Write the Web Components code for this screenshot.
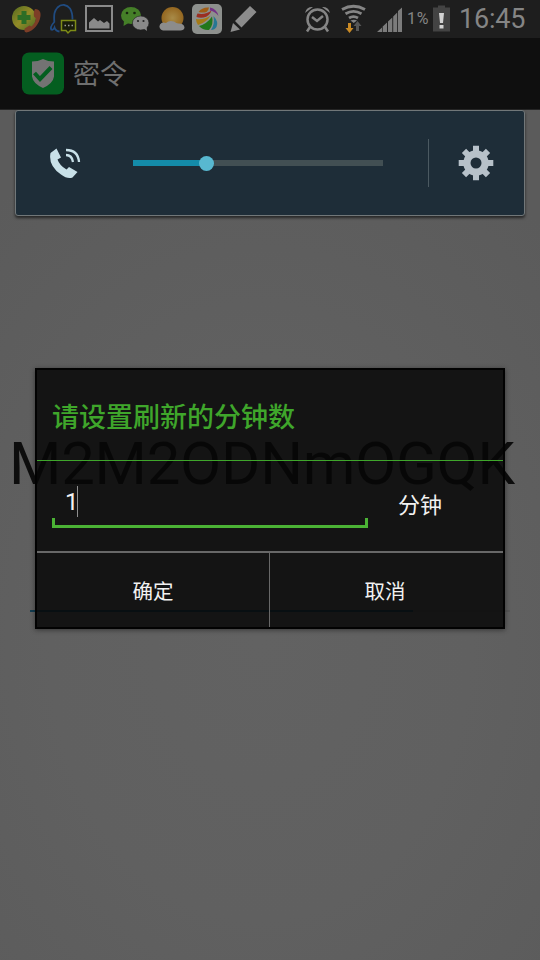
<!DOCTYPE html>
<html lang="zh-CN">
<head>
<meta charset="utf-8">
<title>密令</title>
<style>
html,body{margin:0;padding:0;background:#5e5e5e}
body{width:540px;height:960px;overflow:hidden;font-family:Roboto,"Noto Sans CJK SC",sans-serif}
</style>
</head>
<body>
<phone-screen>
  <status-bar slot="bars"></status-bar>
  <action-bar slot="bars">密令</action-bar>
  <code-display slot="content">M2M2ODNmOGQK</code-display>
  <volume-panel slot="overlay"></volume-panel>
  <minutes-dialog slot="overlay">
    <span slot="title">请设置刷新的分钟数</span>
    <edit-field slot="field">1</edit-field>
    <span slot="unit">分钟</span>
    <dialog-button slot="buttons">确定</dialog-button>
    <dialog-button slot="buttons">取消</dialog-button>
  </minutes-dialog>
</phone-screen>
<script>
function define(name, html) {
  customElements.define(name, class extends HTMLElement {
    constructor() {
      super();
      const t = document.createElement('template');
      t.innerHTML = html;
      this.attachShadow({mode: 'open'}).append(t.content.cloneNode(true));
    }
  });
}

define('phone-screen', `
<style>
:host{display:flex;flex-direction:column;position:relative;width:540px;height:960px;overflow:hidden;
 background:radial-gradient(ellipse 420px 560px at 260px 640px,#626262 0,#606060 50%,#5b5b5b 100%)}
main{flex:1}
</style>
<slot name="bars"></slot><main><slot name="content"></slot></main><slot name="overlay"></slot>`);

define('status-bar', `
<style>
:host{display:flex;box-sizing:border-box;height:38px;background:#1e1e1e;color:#858585}
.left{display:flex;width:296px}
.right{display:flex;flex:1;align-items:center;justify-content:flex-start}
svg{display:block;flex:none}
.pct{width:24px;margin-left:2px;font-size:16px;letter-spacing:.7px;line-height:40px;white-space:nowrap}
.time{margin-left:8px;font-size:27px;line-height:38px;letter-spacing:-.2px;white-space:nowrap}
</style>
<div class="left">
<svg width="296" height="38" viewBox="0 0 296 38">
 <defs>
  <radialGradient id="sun"><stop offset="0" stop-color="#a88b48"/><stop offset="1" stop-color="#94661f"/></radialGradient>
  <linearGradient id="ball" x2="1" y2="1"><stop stop-color="#526a20"/><stop offset=".5" stop-color="#938b27"/><stop offset="1" stop-color="#486826"/></linearGradient>
 </defs>
 <circle cx="24" cy="18" r="12" fill="url(#ball)"/>
 <path d="M21.500 11h5v4h4v5h-4v4h-5v-4h-4v-5h4z" fill="#2c6d25"/>
 <path d="M35 9c5 0 6 4 5.500 7-1 8-7 15-14 16.500-2 0-3-3-1-4.500l4-2.500 2 1c3-3 4-5 4.500-8l-2-2c-.5-3 0-6 1-7.500z" fill="#7d3e27"/>
 <path d="M51.500 30c-1.500-2 0-5 2.800-8-.5-8 0-11 3.200-14.500 4-4 9.500-3 12.500 1 2.200 3.500 2.500 6.500 2.500 11M51.500 30q2 0 3-2.500 1 3.500 5 4" fill="none" stroke="#204b80" stroke-width="1.800"/>
 <path d="M61.500 20.500h14v10h-5l-2.500 2.500-2-2.500h-4.500z" fill="#191d0b" stroke="#7e8c17" stroke-width="1.500"/>
 <path d="M64.500 25.500h1.500M68 25.500h1.500M71.500 25.500h1.500" stroke="#999" stroke-width="1.500"/>
 <rect x="86" y="6" width="26" height="25" fill="none" stroke="#8a8a8a" stroke-width="2"/>
 <path d="M89 28.500v-6l5-4.500 4 3.500 2-1.500 4 3 3-2 2.500 2.500v5z" fill="#8a8a8a"/>
 <ellipse cx="131" cy="15.500" rx="10" ry="8.500" fill="#457f28"/><path d="M124 21l-.5 5 5-3z" fill="#457f28"/>
 <circle cx="127" cy="13" r="1.300" fill="#17240f"/><circle cx="134.500" cy="13" r="1.300" fill="#17240f"/>
 <ellipse cx="140.700" cy="23" rx="8.300" ry="7" fill="#898989" stroke="#1e1e1e" stroke-width=".6"/><path d="M143 28l4 3-.5-5z" fill="#898989"/>
 <circle cx="138" cy="21" r="1.100" fill="#252525"/><circle cx="143.500" cy="21" r="1.100" fill="#252525"/>
 <circle cx="172.500" cy="18" r="11" fill="url(#sun)"/>
 <path d="M163 30.500a4 4 0 0 1-3-6q2-3 6-1.500 3-3 8-1.500 3 2.500 5 2 5 0 5.500 4c0 2-2 3-4 3z" fill="#8c8c8c"/>
 <rect x="192" y="4" width="30" height="30" rx="5" fill="#8d908d"/>
 <path d="M198.500 12q3.500-5 10.500-4.500-.5 3-2.500 4.500-3.500 1-8 0z" fill="#a05d15"/>
 <path d="M197.500 13.500q8 1.500 14-3-2 6-8 7-4 .5-7-.5 0-2 1-3.500z" fill="#9b2f22"/>
 <path d="M196 19q9 1 14.500-3.500-4 7-12.500 9.500-2-3-2-6z" fill="#a57a16"/>
 <path d="M212 16.500q2 8-3 13.500-6 .5-10-4 8-2 13-9.500z" fill="#21771b"/>
 <path d="M213.500 16q5.500 6 3 11-2 3-5.500 3 4-6 2.500-14z" fill="#267793"/>
 <path d="M210 7.500q7 1.500 8.500 8.500-3-4.500-8.500-5.500z" fill="#743285"/>
 <path d="M230.500 32l2.500-9 7 6.500zM235 21l15-15 6.500 6-15 15.500z" fill="#8c8c8c"/>
</svg></div>
<div class="right">
<svg width="109" height="38" viewBox="296 0 109 38">
 <g fill="none" stroke="#858585" stroke-width="2.500"><circle cx="317.500" cy="19.500" r="10"/><path d="M312 17l5 4 6-5M310 27l-3 4.500M325 27l3 4.500"/></g>
 <path d="M305 13a7 7 0 0 1 8-6zM330 13a7 7 0 0 0-8-6z" fill="#858585"/>
 <g fill="none" stroke="#858585" stroke-width="2.800"><path d="M342 9.500q11.500-6.500 23 0M345.500 13.800q8-4.800 16 0M349 18q4.500-2.800 9 0"/></g>
 <path d="M350.500 20.500q3.500-1.500 6.500 0l-3.300 2.500z" fill="#858585"/>
 <path d="M348 23h3v5h2.500l-4 5-4-5h2.500z" fill="#c98a25"/><path d="M356 31h3v-5h2.500l-4-5-4 5h2.500z" fill="#565656"/>
 <path d="M377 32l5-4.500V32zM382.700 32v-5.500l4.300-4V32zM388 32V21.500l4.300-4V32zM393.200 32V16.500l4-4V32zM398 32V11l4-3.500V32z" fill="#7c7c7c"/>
</svg>
<span class="pct">1%</span>
<svg width="20" height="38" viewBox="431 0 20 38"><path d="M433 7.500h5v-2h7v2h5v24h-17z" fill="#434343"/><path d="M439 13h5l-1 10h-3zM439.500 25h4v3.500h-4z" fill="#d2d2d2"/></svg>
<span class="time">16:45</span>
</div>`);

define('action-bar', `
<style>
:host{display:flex;box-sizing:border-box;align-items:center;height:72px;padding:0 22px 1px;background:#0f0f0f;
 border-bottom:1px solid #252525;color:#6f6f6f;font-size:27px;line-height:70px}
svg{display:block;margin-right:9px}
span{padding-top:2px;height:70px;box-sizing:border-box}
</style>
<svg width="42" height="43" viewBox="0 0 42 43"><rect width="42" height="42" y=".5" rx="7" fill="#045e20"/>
<path d="M10 9.500q6 0 11-2.500 5 2.500 11 2.500v15q-1 7-11 11.500-10-4.500-11-11.500z" fill="#737373"/><path d="M12.500 21l5.500 6 11-11.500" fill="none" stroke="#045e20" stroke-width="4"/></svg>
<span><slot></slot></span>`);

define('code-display', `
<style>
:host{display:flex;flex-direction:column;align-items:center;box-sizing:border-box;height:502px;padding-top:318px;color:#0d0d0d}
.code{font-size:60px;line-height:72px;letter-spacing:-.3px;white-space:nowrap;transform:translateX(-8px)}
.track{width:480px;height:2px;margin-top:110px;background:linear-gradient(90deg,#123c50 383px,#575757 383px)}
</style>
<div class="code"><slot></slot></div><div class="track"></div>`);

define('volume-panel', `
<style>
:host{display:flex;box-sizing:border-box;align-items:center;position:absolute;left:15px;top:110px;width:510px;height:106px;
 padding:0 30px 0 34px;border:1px solid #717779;border-radius:3px;background:#1e2d38;box-shadow:0 2px 3px rgba(0,0,0,.6)}
svg{display:block;flex:none}
.track{display:flex;flex:none;align-items:center;width:250px;height:6px;margin-left:52px;background:#424f53}
.level{width:73px;height:6px;background:#148ba9}
.thumb{width:15px;height:15px;margin-left:-7px;border-radius:50%;background:#58b8d0;flex:none}
.line{flex:none;width:1px;height:48px;margin:0 29px 0 45px;background:#4b5961}
</style>
<svg width="31" height="32" viewBox="50 148 31 32"><path d="M50.500 154l6-4.500 4.500 9-3.500 2q2 6 9 10l2.500-2.500 8.500 5-5 5.500q-5 2-11.500-3-13-9-10.500-21.500z" fill="#c8e0e8"/><path d="M66 156q6 0 7 7M66 151q12 0 13 12" fill="none" stroke="#c8e0e8" stroke-width="2.300"/></svg>
<div class="track"><div class="level"></div><div class="thumb"></div></div><div class="line"></div>
<svg width="36" height="36" viewBox="-18 -18 36 36"><g fill="#b7c1c9"><path d="M-3-17.300h6v34.600h-6zM-17.300-3h34.600v6h-34.600z"/><path transform="rotate(45)" d="M-3-17h6v34h-6zM-17-3h34v6h-34z"/><circle r="12.700"/></g><circle r="5.500" fill="#1e2d38"/></svg>`);

define('minutes-dialog', `
<style>
:host{display:flex;flex-direction:column;box-sizing:border-box;position:absolute;left:35px;top:368px;width:470px;height:261px;
 border:2px solid #020202;background:rgba(7,7,7,.85);background-clip:padding-box;box-shadow:0 1px 5px rgba(0,0,0,.45)}
header{box-sizing:border-box;height:91px;padding:2px 15px 0;border-bottom:1px solid #3fa62b;color:#3fa62b;font-size:27px;line-height:92px;font-weight:500}
.body{display:flex;box-sizing:border-box;height:92px;padding-left:15px;border-bottom:2px solid #686868;color:#f2f2f2}
.unit{margin-left:30px;padding-top:1px;font-size:22px;line-height:88px}
footer{display:flex;height:74px}
</style>
<header><slot name="title"></slot></header>
<div class="body"><slot name="field"></slot><div class="unit"><slot name="unit"></slot></div></div>
<footer><slot name="buttons"></slot></footer>`);

define('edit-field', `
<style>
:host{display:flex;flex-direction:column;width:316px;height:67px}
.value{display:flex;align-items:center;height:57px;padding-left:13px;box-sizing:border-box;font-size:24px;line-height:32px}
.text{margin-top:25px;height:32px}
.caret{width:1px;height:31px;margin:24px 0 0 -2px;background:#8f8f8f}
.rail{box-sizing:border-box;height:10px;border:3px solid #4bb235;border-top:0}
</style>
<div class="value"><span class="text"><slot></slot></span><i class="caret"></i></div><div class="rail"></div>`);

define('dialog-button', `
<style>
:host{display:block;flex:0 0 233px;height:74px;box-sizing:border-box;text-align:center;font-size:20.500px;line-height:79px;color:#f2f2f2}
:host(:first-of-type){border-right:1px solid #686868}
:host(:last-of-type){padding-right:3px}
</style><slot></slot>`);
</script>
</body>
</html>
